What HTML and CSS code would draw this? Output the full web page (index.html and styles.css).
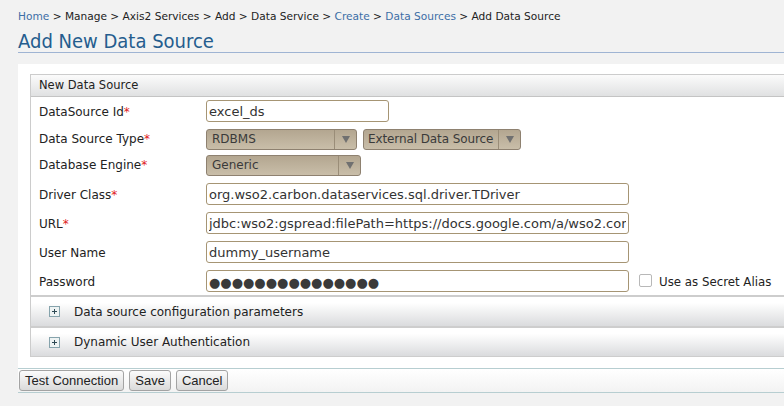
FILE: index.html
```html
<!DOCTYPE html>
<html>
<head>
<meta charset="utf-8">
<link rel="stylesheet" href="styles.css">
</head>
<body>
<div class="breadcrumb"><a href="#">Home</a> &gt; Manage &gt; Axis2 Services &gt; Add &gt; Data Service &gt; <a href="#">Create</a> &gt; <a href="#">Data Sources</a> &gt; Add Data Source</div>
<h2 class="title">Add New Data Source</h2>
<div class="main">
  <div class="box">
    <div class="box-head">New Data Source</div>
    <div class="row r-29">
      <label class="lbl">DataSource Id<span class="req">*</span></label>
      <input class="txt w-id" type="text" value="excel_ds">
    </div>
    <div class="row r-26">
      <label class="lbl lbl-sel">Data Source Type<span class="req">*</span></label>
      <div class="sel w-rdbms"><span class="val">RDBMS</span><span class="arr"><i class="tri"></i></span></div>
      <div class="sel w-ext gap"><span class="val">External Data Source</span><span class="arr"><i class="tri"></i></span></div>
    </div>
    <div class="row r-28">
      <label class="lbl lbl-sel">Database Engine<span class="req">*</span></label>
      <div class="sel w-gen"><span class="val">Generic</span><span class="arr"><i class="tri"></i></span></div>
    </div>
    <div class="row r-29">
      <label class="lbl">Driver Class<span class="req">*</span></label>
      <input class="txt w-long" type="text" value="org.wso2.carbon.dataservices.sql.driver.TDriver">
    </div>
    <div class="row r-29">
      <label class="lbl">URL<span class="req">*</span></label>
      <input class="txt w-long" type="text" value="jdbc:wso2:gspread:filePath=https://docs.google.com/a/wso2.com/spreadsheet/ccc?key=0Ajg">
    </div>
    <div class="row r-29">
      <label class="lbl">User Name</label>
      <input class="txt w-long" type="text" value="dummy_username">
    </div>
    <div class="row r-28">
      <label class="lbl">Password</label>
      <input class="txt w-long pw" type="text" value="●●●●●●●●●●●●●●●">
      <input class="chk" type="checkbox">
      <span class="chk-lbl">Use as Secret Alias</span>
    </div>
    <div class="section s-first">
      <svg class="plus" width="11" height="11" viewBox="0 0 11 11"><rect x="0.5" y="0.5" width="10" height="10" fill="#eef3f3" stroke="#86a3ac"/><path d="M3 5.5h5M5.5 3v5" stroke="#2f4a55" stroke-width="1"/></svg>
      <span>Data source configuration parameters</span>
    </div>
    <div class="section s-last">
      <svg class="plus" width="11" height="11" viewBox="0 0 11 11"><rect x="0.5" y="0.5" width="10" height="10" fill="#eef3f3" stroke="#86a3ac"/><path d="M3 5.5h5M5.5 3v5" stroke="#2f4a55" stroke-width="1"/></svg>
      <span>Dynamic User Authentication</span>
    </div>
  </div>
</div>
<div class="buttons">
  <button class="btn" type="button">Test Connection</button>
  <button class="btn" type="button">Save</button>
  <button class="btn" type="button">Cancel</button>
</div>
</body>
</html>
```
FILE: styles.css
```css
html, body {
  margin: 0;
  padding: 0;
}
body {
  background: #f2f2f2;
  font-family: "DejaVu Sans", "Noto Sans", sans-serif;
  color: #222;
  width: 784px;
  height: 406px;
  overflow: hidden;
}
.breadcrumb {
  padding: 9px 0 0 18px;
  height: 15px;
  line-height: 15px;
  font-size: 10.6px;
  color: #222;
  white-space: nowrap;
}
.breadcrumb a {
  color: #3d6ea6;
  text-decoration: none;
}
.title {
  margin: 0 0 11px 18px;
  padding-top: 6px;
  height: 22px;
  line-height: 22px;
  font-size: 20px;
  font-weight: normal;
  color: #255d8e;
  border-bottom: 1px solid #9fb4d3;
  font-family: "DejaVu Sans Condensed", "DejaVu Sans", sans-serif;
  font-stretch: condensed;
  white-space: nowrap;
}
.main {
  margin-left: 18px;
  background: #fff;
  padding: 10px 0 11px 12px;
}
.box {
  border-left: 1px solid #cccccc;
}
.box-head {
  border-top: 1px solid #cccccc;
  border-bottom: 1px solid #c4c4c4;
  height: 21px;
  line-height: 21px;
  padding-left: 8px;
  font-size: 11.5px;
  background: linear-gradient(#fbfbfb, #e0e1e2);
}
.row {
  display: flex;
  align-items: flex-start;
  box-sizing: border-box;
  padding: 3px 0 0 8px;
}
.r-29 { height: 29px; }
.r-28 { height: 28px; }
.r-26 { height: 26px; }
.lbl {
  width: 167px;
  flex: none;
  font-size: 12px;
  line-height: 22px;
  padding-top: 1px;
  white-space: nowrap;
}
.lbl-sel {
  line-height: 21px;
  padding-top: 0;
}
.req {
  color: #e0201c;
}
.txt {
  box-sizing: border-box;
  height: 22px;
  margin: 0;
  border: 1px solid #a69574;
  border-radius: 3px;
  padding: 0 2px;
  font-family: "DejaVu Sans", sans-serif;
  font-size: 13px;
  color: #333;
  background: #fff;
  outline: none;
}
.w-id { width: 183px; }
.w-long { width: 423px; }
.pw {
  color: #3a3a3a;
  padding-top: 2px;
}
.sel {
  display: flex;
  box-sizing: border-box;
  height: 21px;
  border: 1px solid #8e8170;
  border-radius: 3px;
  background: linear-gradient(#b3a690, #c9bea9);
  font-size: 12px;
  color: #3a3a3a;
}
.sel .val {
  flex: 1;
  padding-left: 5px;
  line-height: 19px;
  white-space: nowrap;
  overflow: hidden;
}
.sel .arr {
  width: 21px;
  flex: none;
  border-left: 1px solid #9a8d78;
  display: flex;
  align-items: center;
  justify-content: center;
}
.tri {
  width: 0;
  height: 0;
  border-left: 4px solid transparent;
  border-right: 4px solid transparent;
  border-top: 7px solid #707070;
}
.w-rdbms { width: 151px; }
.w-ext { width: 158px; }
.w-ext .val { padding-left: 4px; letter-spacing: -0.1px; }
.w-gen { width: 155px; }
.gap { margin-left: 6px; }
.chk {
  appearance: none;
  -webkit-appearance: none;
  box-sizing: border-box;
  width: 13px;
  height: 13px;
  margin: 4px 0 0 10px;
  border: 1px solid #b8b8b8;
  border-radius: 2px;
  background: #fff;
}
.chk-lbl {
  margin-left: 7px;
  font-size: 11.8px;
  line-height: 24px;
  white-space: nowrap;
}
.section {
  display: flex;
  align-items: center;
  padding-left: 18px;
  border-top: 2px solid #cdcdcd;
  background: linear-gradient(#ffffff 20%, #dadbdd);
  font-size: 12px;
}
.s-first { height: 29px; }
.s-last {
  height: 28px;
  border-bottom: 1px solid #cdcdcd;
}
.plus {
  flex: none;
  margin-right: 14px;
}
.buttons {
  margin-left: 18px;
  height: 23px;
  border-top: 1px solid #b7ced1;
  border-bottom: 1px solid #b7ced1;
  background: linear-gradient(#ffffff, #f3f3f3);
  display: flex;
  align-items: flex-start;
  gap: 5px;
  padding-left: 1px;
}
.btn {
  margin: 1px 0 0 0;
  height: 21px;
  box-sizing: border-box;
  padding: 0 5px;
  border: 1px solid #a3a3a3;
  border-radius: 3px;
  background: linear-gradient(#fbfbfb, #dadada);
  font-family: "Liberation Sans", Arial, sans-serif;
  font-size: 13px;
  color: #222;
  line-height: 19px;
}
```
